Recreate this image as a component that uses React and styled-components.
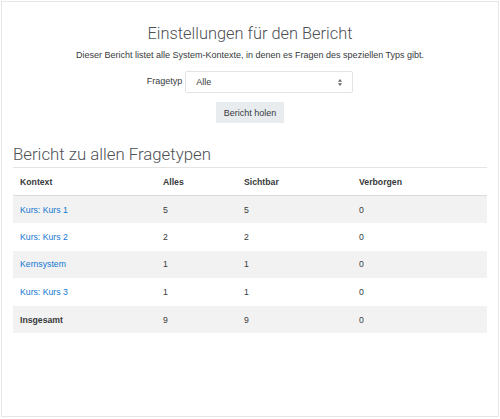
import React from 'react';
import styled, { createGlobalStyle } from 'styled-components';

const GlobalStyle = createGlobalStyle`
  html, body {
    margin: 0;
    padding: 0;
    background: #fff;
  }
  body {
    font-family: "Liberation Sans", Arial, sans-serif;
    color: #373a3c;
  }
`;

const Page = styled.div`
  padding: 1px;
`;

const Card = styled.div`
  box-sizing: border-box;
  width: 498px;
  height: 416px;
  border: 1px solid #e6e6e6;
  padding: 0 11px;
`;

const Settings = styled.section`
  display: flex;
  flex-direction: column;
  align-items: center;
  padding-top: 22px;
`;

const Title = styled.h2`
  margin: 0;
  font-family: Roboto, "Liberation Sans", sans-serif;
  font-weight: 300;
  font-size: 16.4px;
  line-height: 20px;
  color: #4d5053;
`;

const Description = styled.p`
  margin: 5px 0 0;
  font-size: 9px;
  line-height: 12px;
`;

const FormRow = styled.div`
  display: flex;
  align-items: center;
  gap: 3px;
  margin-top: 10px;
`;

const Label = styled.label`
  font-size: 9px;
  margin-top: -3px;
`;

const SelectBox = styled.div`
  box-sizing: border-box;
  width: 168px;
  height: 22px;
  border: 1px solid #e3e3e3;
  border-radius: 2px;
  display: flex;
  align-items: center;
  justify-content: space-between;
  padding: 0 10px;
  font-size: 9px;
  background: #fff;
`;

const Arrows = styled.svg`
  width: 4px;
  height: 7px;
  display: block;
`;

const Button = styled.button`
  margin-top: 9px;
  width: 68px;
  height: 21px;
  border: none;
  border-radius: 0;
  background: #e9ecef;
  color: #373a3c;
  font-family: "Liberation Sans", Arial, sans-serif;
  font-size: 9px;
  padding: 0;
`;

const SectionTitle = styled.h3`
  margin: 20px 0 0;
  padding-bottom: 2px;
  font-family: Roboto, "Liberation Sans", sans-serif;
  font-weight: 300;
  font-size: 16.8px;
  line-height: 22px;
  color: #4d5053;
`;

const Table = styled.table`
  width: 100%;
  border-collapse: collapse;
  font-size: 8.7px;
`;

const Th = styled.th`
  text-align: left;
  font-weight: bold;
  height: 28px;
  box-sizing: border-box;
  padding: 0 7px;
  border-top: 1px solid #e4e4e4;
  border-bottom: 1px solid #dcdcdc;
  width: ${(p) => p.w || 'auto'};
`;

const Tr = styled.tr`
  background: ${(p) => (p.striped ? '#f2f2f2' : '#fff')};
`;

const Td = styled.td`
  height: 27.6px;
  box-sizing: border-box;
  padding: 0 7px;
  font-weight: ${(p) => (p.bold ? 'bold' : 'normal')};
`;

const Link = styled.a`
  color: #1177d1;
  text-decoration: none;
`;

const rows = [
  { name: 'Kurs: Kurs 1', all: 5, visible: 5, hidden: 0 },
  { name: 'Kurs: Kurs 2', all: 2, visible: 2, hidden: 0 },
  { name: 'Kernsystem', all: 1, visible: 1, hidden: 0 },
  { name: 'Kurs: Kurs 3', all: 1, visible: 1, hidden: 0 },
];

export default function App() {
  return (
    <Page>
      <GlobalStyle />
      <Card>
        <Settings>
          <Title>Einstellungen für den Bericht</Title>
          <Description>
            Dieser Bericht listet alle System-Kontexte, in denen es Fragen des speziellen Typs gibt.
          </Description>
          <FormRow>
            <Label>Fragetyp</Label>
            <SelectBox>
              <span>Alle</span>
              <Arrows viewBox="0 0 4 7">
                <path d="M2 0 L4 2.8 L0 2.8 Z" fill="#666" />
                <path d="M2 7 L4 4.2 L0 4.2 Z" fill="#666" />
              </Arrows>
            </SelectBox>
          </FormRow>
          <Button>Bericht holen</Button>
        </Settings>

        <SectionTitle>Bericht zu allen Fragetypen</SectionTitle>
        <Table>
          <thead>
            <tr>
              <Th w="143px">Kontext</Th>
              <Th w="81px">Alles</Th>
              <Th w="115px">Sichtbar</Th>
              <Th>Verborgen</Th>
            </tr>
          </thead>
          <tbody>
            {rows.map((r, i) => (
              <Tr key={r.name} striped={i % 2 === 0}>
                <Td><Link href="#">{r.name}</Link></Td>
                <Td>{r.all}</Td>
                <Td>{r.visible}</Td>
                <Td>{r.hidden}</Td>
              </Tr>
            ))}
            <Tr striped>
              <Td bold>Insgesamt</Td>
              <Td>9</Td>
              <Td>9</Td>
              <Td>0</Td>
            </Tr>
          </tbody>
        </Table>
      </Card>
    </Page>
  );
}
